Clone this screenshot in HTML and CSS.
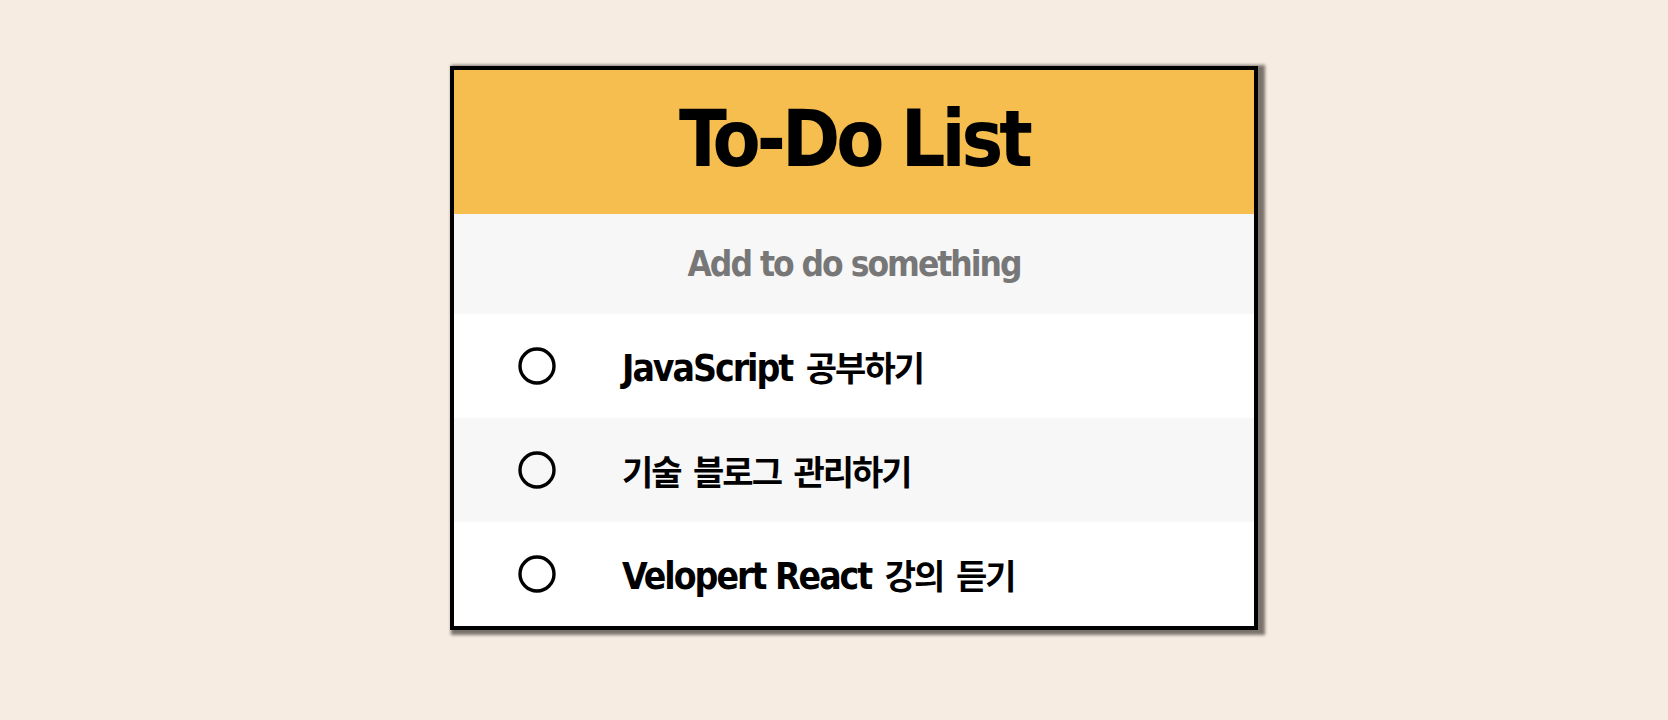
FILE: index.html
```html
<!DOCTYPE html>
<html lang="ko">
<head>
<meta charset="utf-8">
<title>To-Do List</title>
<link rel="stylesheet" href="styles.css">
</head>
<body>
<main class="page">
  <section class="todo">
    <header class="todo-header">
      <h1 class="todo-title">To-Do List</h1>
    </header>
    <form class="todo-form">
      <input class="todo-input" type="text" placeholder="Add to do something">
    </form>
    <ul class="todo-list">
      <li class="todo-item">
        <svg class="todo-check" width="38" height="38" viewBox="0 0 38 38"><circle cx="19" cy="19" r="17" fill="none" stroke="#000" stroke-width="3.4"/></svg>
        <span class="todo-text">JavaScript <span class="ko">공부하기</span></span>
      </li>
      <li class="todo-item alt">
        <svg class="todo-check" width="38" height="38" viewBox="0 0 38 38"><circle cx="19" cy="19" r="17" fill="none" stroke="#000" stroke-width="3.4"/></svg>
        <span class="todo-text"><span class="ko first">기술 블로그 관리하기</span></span>
      </li>
      <li class="todo-item">
        <svg class="todo-check" width="38" height="38" viewBox="0 0 38 38"><circle cx="19" cy="19" r="17" fill="none" stroke="#000" stroke-width="3.4"/></svg>
        <span class="todo-text">Velopert React <span class="ko">강의 듣기</span></span>
      </li>
    </ul>
  </section>
</main>
</body>
</html>
```
FILE: styles.css
```css
* { box-sizing: border-box; }
html, body { margin: 0; padding: 0; }
body {
  background: #f6ece2;
  font-family: "DejaVu Sans Condensed", "Noto Sans CJK KR", sans-serif;
  height: 720px;
  overflow: hidden;
}
.page {
  display: flex;
  justify-content: center;
  padding: 66px 0 0 40px;
}
.todo {
  width: 808px;
  border: 4px solid #000;
  background: #fff;
  box-shadow: 4px 2px 3px 3px rgba(40, 35, 30, 0.6);
}
.todo-header {
  height: 144px;
  background: #f5be4f;
  display: flex;
  align-items: center;
  justify-content: center;
}
.todo-title {
  margin: 0;
  font-size: 78px;
  font-weight: 700;
  color: #000;
  letter-spacing: -4px;
  line-height: 1;
  padding-bottom: 6px;
}
.todo-form {
  margin: 0;
  height: 100px;
  background: #f7f7f7;
}
.todo-input {
  width: 100%;
  height: 100%;
  border: none;
  outline: none;
  background: transparent;
  text-align: center;
  font-family: "DejaVu Sans Condensed", "Noto Sans CJK KR", sans-serif;
  font-weight: 700;
  font-size: 35px;
  letter-spacing: -2px;
  color: #777;
  padding: 0;
}
.todo-input::placeholder { color: #777; opacity: 1; }
.todo-list {
  list-style: none;
  margin: 0;
  padding: 0;
}
.todo-item {
  height: 104px;
  display: flex;
  align-items: center;
  padding-left: 64px;
  background: #fff;
}
.todo-item.alt { background: #f7f7f7; }
.todo-check { flex: none; }
.todo-text {
  margin-left: 66px;
  font-size: 37px;
  font-weight: 700;
  color: #000;
  letter-spacing: -2px;
}
.ko {
  font-family: "Noto Sans CJK KR", sans-serif;
  font-size: 34px;
  letter-spacing: -2px;
  word-spacing: 5px;
  margin-left: 4px;
}
.ko.first { margin-left: 0; }
```
